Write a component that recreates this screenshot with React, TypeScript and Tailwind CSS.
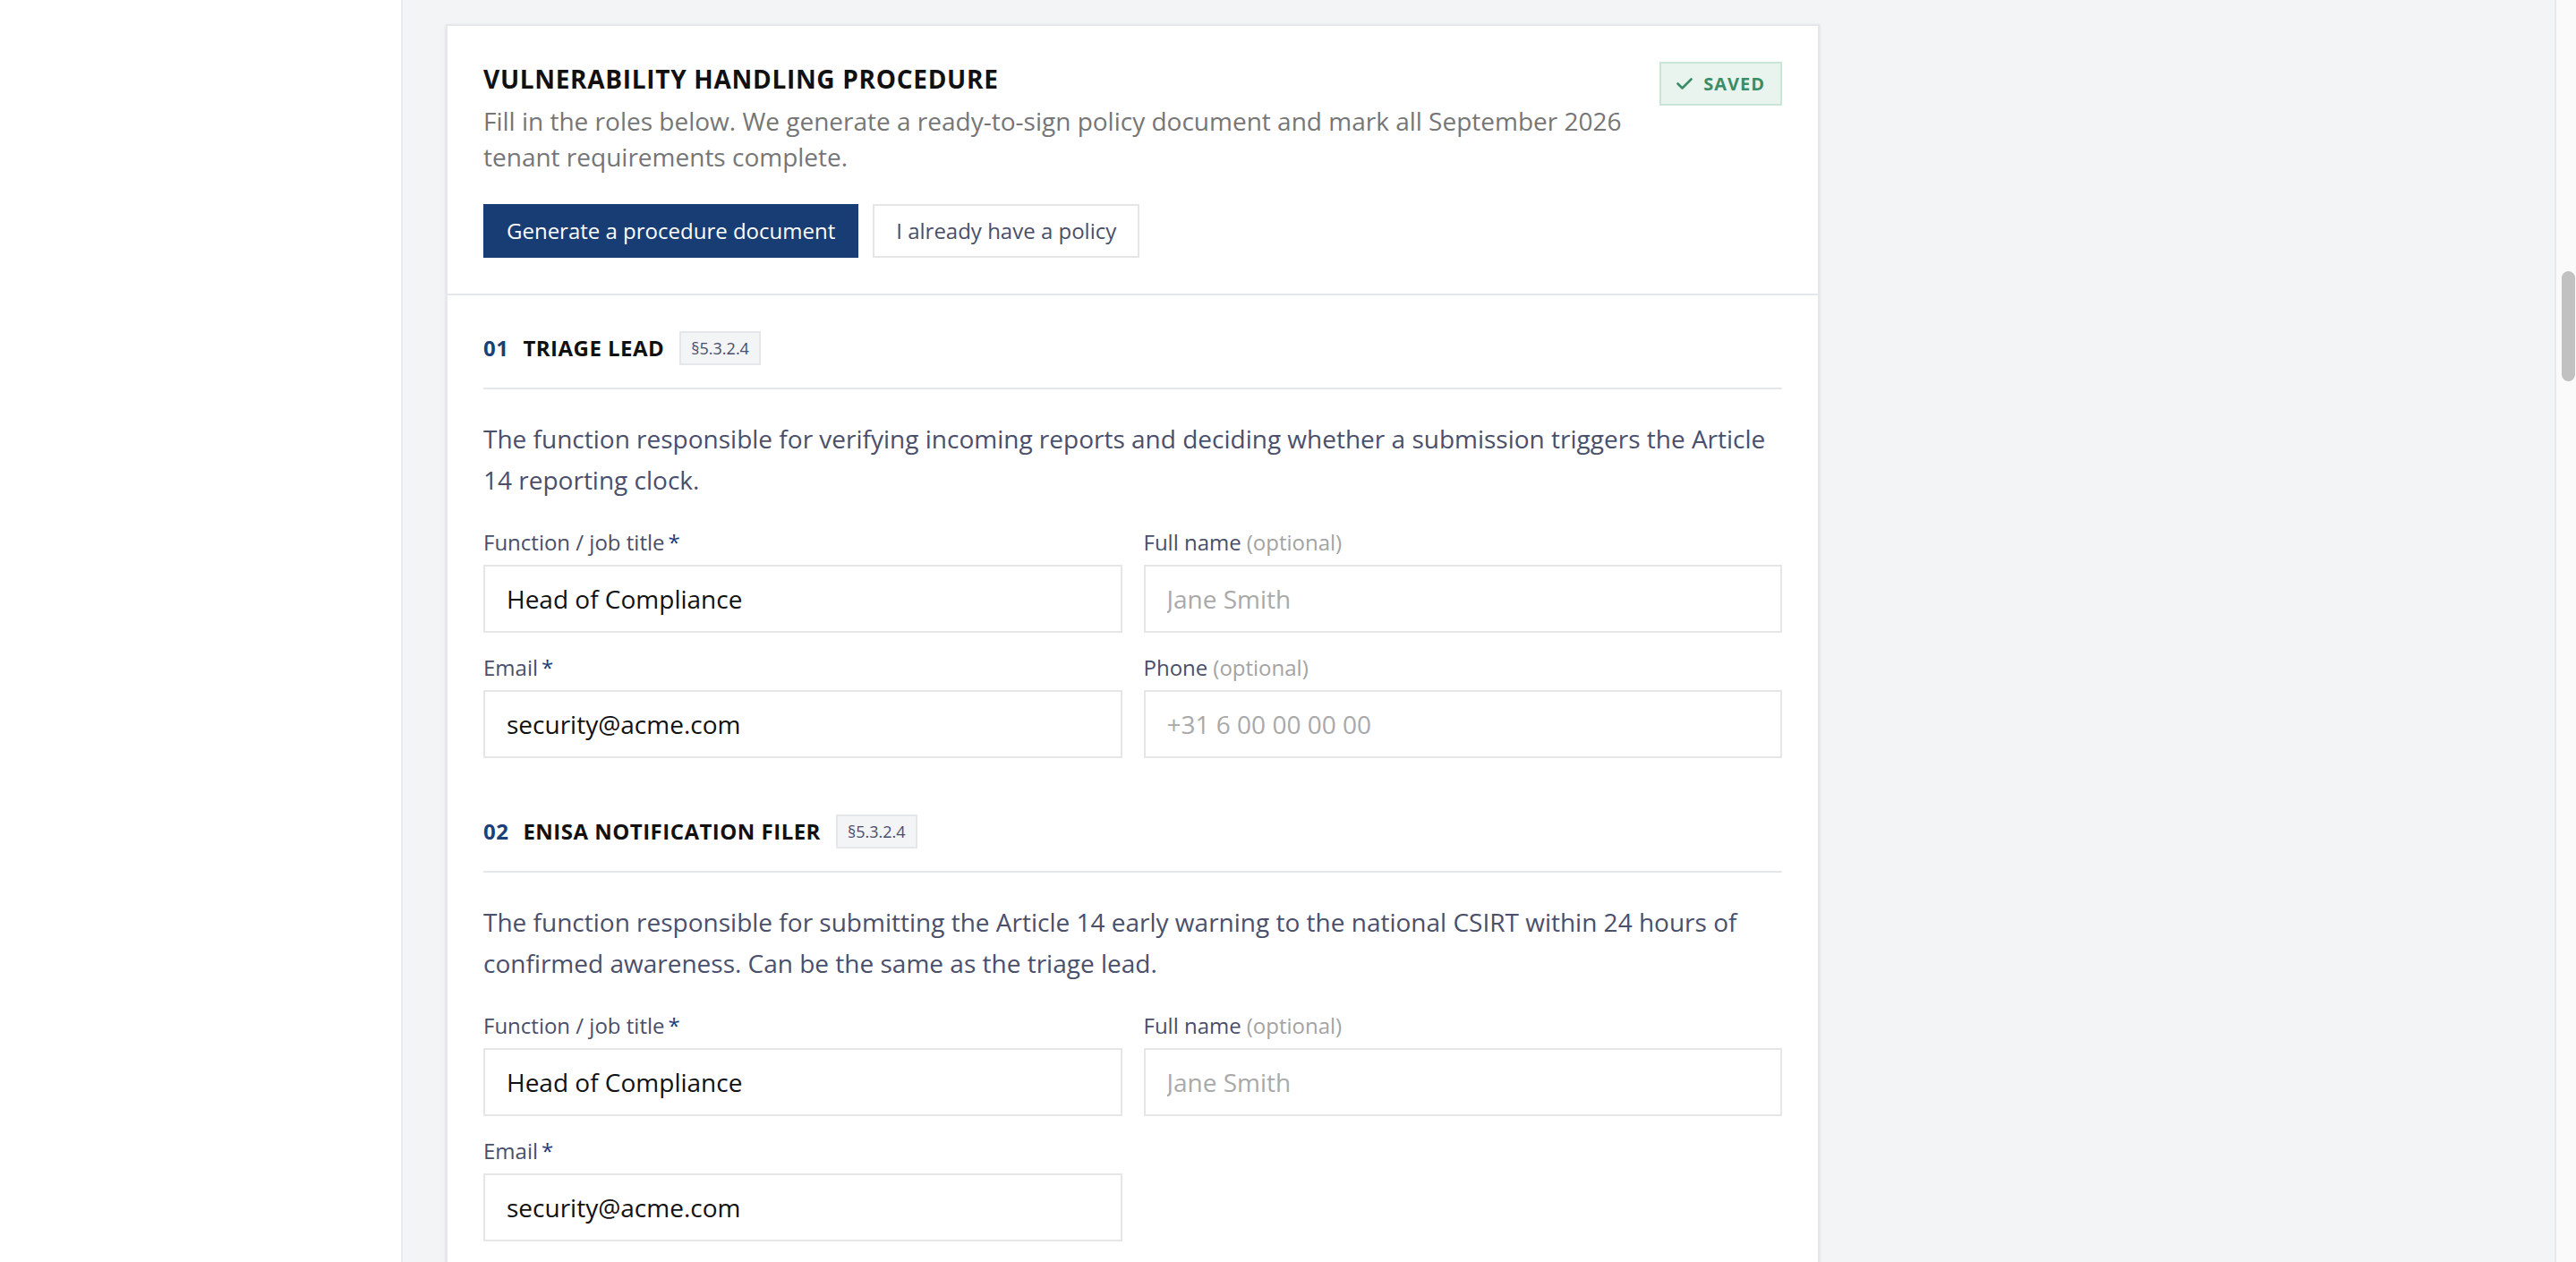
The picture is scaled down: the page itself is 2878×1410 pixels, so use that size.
import React from "react";

function Field({
  label,
  required,
  optional,
  value,
  placeholder,
}: {
  label: string;
  required?: boolean;
  optional?: boolean;
  value?: string;
  placeholder?: string;
}) {
  return (
    <div className="flex flex-col">
      <label className="mb-[7px] text-[24px] leading-[36px] text-[#4a4e69]">
        {label}
        {required && <span className="ml-[4px] text-[#1b3d75]">*</span>}
        {optional && <span className="ml-[6px] text-[#a3a3a3]">(optional)</span>}
      </label>
      <input
        className="h-[76px] w-full border-2 border-[#e6e6e6] bg-white px-[24px] text-[28px] text-[#111] outline-none placeholder:text-[#a9a9a9]"
        defaultValue={value}
        placeholder={placeholder}
      />
    </div>
  );
}

function SectionHead({ num, title }: { num: string; title: string }) {
  return (
    <div className="flex items-center border-b-2 border-[#e5e7eb] pb-[25px]">
      <span className="mr-[16px] text-[24px] font-bold tracking-[0.02em] text-[#1b3f78]">{num}</span>
      <span className="text-[24px] font-bold tracking-[0.02em] text-[#111]">{title}</span>
      <span className="ml-[17px] flex h-[38px] items-center border-2 border-[#e5e7eb] bg-[#f3f4f6] px-[11px] text-[18px] text-[#4a4e69]">
        §5.3.2.4
      </span>
    </div>
  );
}

export default function App() {
  return (
    <div className="flex h-[1410px] w-full overflow-hidden font-['Open_Sans',sans-serif]">
      <aside className="w-[450px] shrink-0 border-r-2 border-[#e8e9ec] bg-white" />
      <main className="flex-1 bg-[#f3f4f6] pl-[48px] pt-[27px]">
        <div className="w-[1535px] border-2 border-[#e5e7eb] bg-white shadow-sm">
          <div className="border-b-2 border-[#e5e7eb] p-[40px]">
            <div className="flex items-start justify-between gap-8">
              <div className="flex-1">
                <h2 className="text-[28px] font-bold leading-[38px] tracking-[0.025em] text-[#111]">
                  VULNERABILITY HANDLING PROCEDURE
                </h2>
                <p className="mt-[8px] text-[28px] leading-[40px] text-[#767676]">
                  Fill in the roles below. We generate a ready-to-sign policy document and mark all September 2026
                  tenant requirements complete.
                </p>
              </div>
              <div className="flex h-[49px] shrink-0 items-center gap-[12px] border-2 border-[#c8e5d5] bg-[#eaf4ee] px-[17px]">
                <svg width="18" height="13" viewBox="0 0 18 13" fill="none">
                  <path d="M1.5 6.5 L6.5 11.5 L16.5 1.5" stroke="#3b8d66" strokeWidth="2.6" strokeLinecap="round" strokeLinejoin="round" />
                </svg>
                <span className="text-[20px] font-bold tracking-[0.05em] text-[#3b8d66]">SAVED</span>
              </div>
            </div>
            <div className="mt-[33px] flex gap-[16px]">
              <button className="h-[60px] border-2 border-[#173d74] bg-[#173d74] px-[24px] text-[24px] text-white">
                Generate a procedure document
              </button>
              <button className="h-[60px] border-2 border-[#e6e6e6] bg-white px-[24px] text-[24px] text-[#4a4e69]">
                I already have a policy
              </button>
            </div>
          </div>

          <div className="px-[40px] pt-[40px]">
            <section>
              <SectionHead num="01" title="TRIAGE LEAD" />
              <p className="mt-[33px] text-[28px] leading-[1.625] text-[#4a4f6b]">
                The function responsible for verifying incoming reports and deciding whether a submission triggers the
                Article 14 reporting clock.
              </p>
              <div className="mt-[29px] grid grid-cols-2 gap-x-[24px] gap-y-[21px]">
                <Field label="Function / job title" required value="Head of Compliance" />
                <Field label="Full name" optional placeholder="Jane Smith" />
                <Field label="Email" required value="security@acme.com" />
                <Field label="Phone" optional placeholder="+31 6 00 00 00 00" />
              </div>
            </section>

            <section className="mt-[63px]">
              <SectionHead num="02" title="ENISA NOTIFICATION FILER" />
              <p className="mt-[33px] text-[28px] leading-[1.625] text-[#4a4f6b]">
                The function responsible for submitting the Article 14 early warning to the national CSIRT within 24
                hours of confirmed awareness. Can be the same as the triage lead.
              </p>
              <div className="mt-[29px] grid grid-cols-2 gap-x-[24px] gap-y-[21px]">
                <Field label="Function / job title" required value="Head of Compliance" />
                <Field label="Full name" optional placeholder="Jane Smith" />
                <Field label="Email" required value="security@acme.com" />
              </div>
            </section>
            <div className="h-[200px]" />
          </div>
        </div>
      </main>
      <div className="w-[24px] shrink-0 border-l-2 border-[#e8e8e8] bg-[#fafafa] pt-[303px]">
        <div className="ml-[6px] h-[123px] w-[15px] rounded-full bg-[#c1c1c1]" />
      </div>
    </div>
  );
}
